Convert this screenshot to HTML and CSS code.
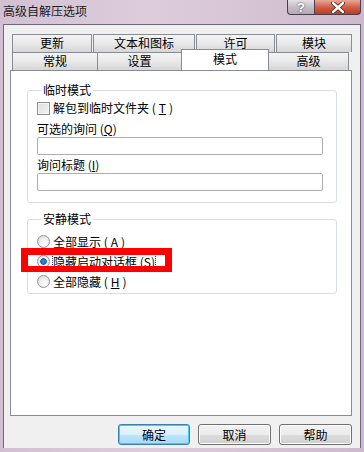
FILE: index.html
```html
<!DOCTYPE html>
<html>
<head>
    <title>高级自解压选项</title>
    <meta charset="UTF-8">
    <link rel="stylesheet" href="styles.css">
</head>
<body>

<div class="window">
    <div class="titlebar">
        <span class="title">高级自解压选项</span>
        <div class="controls">
            <div class="ctl help">?</div>
            <div class="ctl close">
                <svg width="14" height="11" viewBox="0 0 14 11">
                    <path d="M2 1 L12 10 M12 1 L2 10" stroke="#5a1a10" stroke-width="4" stroke-linecap="round"/>
                    <path d="M2 1 L12 10 M12 1 L2 10" stroke="#ffffff" stroke-width="2.4" stroke-linecap="round"/>
                </svg>
            </div>
        </div>
    </div>

    <div class="client">
        <div class="tabs">
            <div class="tab-row row-top">
                <div class="tab" style="width: 80px">更新</div>
                <div class="tab" style="width: 102px">文本和图标</div>
                <div class="tab" style="width: 79px">许可</div>
                <div class="tab" style="width: 76px">模块</div>
            </div>
            <div class="tab-row row-bottom">
                <div class="tab" style="width: 86px">常规</div>
                <div class="tab" style="width: 85px">设置</div>
                <div class="tab active" style="width: 88px">模式</div>
                <div class="tab" style="width: 81px">高级</div>
            </div>
        </div>

        <div class="panel">
            <fieldset class="group group-temp">
                <legend>临时模式</legend>
                <label class="check-row"><span class="checkbox"></span>解包到临时文件夹 (<u>T</u>)</label>
                <div class="field-label">可选的询问 (<u>Q</u>)</div>
                <div class="textbox"></div>
                <div class="field-label">询问标题 (<u>I</u>)</div>
                <div class="textbox"></div>
            </fieldset>

            <fieldset class="group group-silent">
                <legend>安静模式</legend>
                <label class="radio-row"><span class="radio"></span>全部显示 (<u>A</u>)</label>
                <label class="radio-row"><span class="radio checked"></span><span class="focus">隐藏启动对话框 (<u>S</u>)</span></label>
                <label class="radio-row"><span class="radio"></span>全部隐藏 (<u>H</u>)</label>
            </fieldset>
        </div>

        <div class="buttons">
            <button class="default">确定</button>
            <button>取消</button>
            <button>帮助</button>
        </div>
    </div>

    <div class="highlight"></div>
</div>

</body>
</html>
```

FILE: styles.css
```css
/* Global styles */
body {
    margin: 0;
    padding: 0;
    font-family: "Noto Sans CJK SC", "Liberation Sans", sans-serif;
    font-size: 12px;
    color: #000000;
}

.window {
    position: relative;
    width: 364px;
    height: 452px;
    overflow: hidden;
    background: linear-gradient(to right, #d2c0d2, #ddcddb 40%, #d6c4d4 70%, #cdb9cd);
}

/* Title bar */
.titlebar {
    height: 24px;
    display: flex;
    justify-content: space-between;
    align-items: flex-start;
}

.title {
    padding: 3px 0 0 3px;
    line-height: 16px;
    color: #1a1a1a;
}

.controls {
    display: flex;
    margin-right: 3px;
}

.ctl {
    height: 15px;
    border: 1px solid #4a3f4a;
    border-top: none;
    display: flex;
    align-items: center;
    justify-content: center;
    box-sizing: border-box;
}

.help {
    width: 27px;
    border-radius: 0 0 0 4px;
    border-right: none;
    background: linear-gradient(#e6e0e6, #c6bcc6 50%, #b4aab4);
    color: #ffffff;
    font-weight: bold;
    font-family: "Liberation Sans", sans-serif;
    font-size: 13px;
    text-shadow: 0 0 2px #333;
}

.close {
    width: 47px;
    border-radius: 0 0 4px 0;
    background: linear-gradient(#e8a898, #d0604a 50%, #c03a22);
}

/* Client area */
.client {
    height: 424px;
    margin: 0 3px;
    box-sizing: border-box;
    padding: 9px 8px 0 6px;
    background: #f0f0f0;
    border: 1px solid #6f6a78;
    border-bottom: none;
}

.tabs {
    margin-left: 2px;
}

.tab-row {
    display: flex;
    height: 18px;
}

.row-top {
    gap: 1px;
}

.tab {
    box-sizing: border-box;
    height: 18px;
    border: 1px solid #898c95;
    border-bottom: none;
    background: linear-gradient(#f4f4f4, #e8e8e8 50%, #d6d6d6);
    text-align: center;
    line-height: 16px;
}

.row-bottom .tab + .tab {
    margin-left: -1px;
}

.tab.active {
    position: relative;
    z-index: 1;
    height: 21px;
    margin-top: -3px;
    background: #ffffff;
    line-height: 17px;
}

/* Tab page */
.panel {
    height: 346px;
    box-sizing: border-box;
    border: 1px solid #898c95;
    background: #ffffff;
    padding: 12px 14px 0 16px;
}

.group {
    margin: 0;
    padding: 0 0 0 9px;
    border: 1px solid #d5dfe5;
    border-radius: 3px;
    min-width: 0;
}

.group legend {
    padding: 0 2px;
    margin-left: 4px;
    line-height: 14px;
}

.group-temp {
    height: 120px;
    box-sizing: border-box;
}

.group-silent {
    height: 82px;
    box-sizing: border-box;
    margin-top: 9px;
}

u {
    text-decoration: underline;
    text-underline-offset: 1px;
}

.check-row, .radio-row {
    display: flex;
    align-items: center;
    gap: 3px;
    height: 14px;
    line-height: 14px;
}

.check-row {
    margin-top: 4px;
}

.checkbox {
    width: 11px;
    height: 11px;
    border: 1px solid #8e8f8f;
    background: linear-gradient(135deg, #dcdcdc, #f4f4f4);
    box-shadow: inset 0 0 0 1px #f4f4f4;
}

.field-label {
    height: 14px;
    line-height: 14px;
    margin-top: 7px;
}

.textbox + .field-label {
    margin-top: 3px;
}

.textbox {
    width: 284px;
    height: 16px;
    margin-top: 1px;
    border: 1px solid #abadb3;
    border-radius: 2px;
    background: #ffffff;
}

.radio-row {
    height: 19px;
    line-height: 19px;
}

.group-silent .radio-row:first-of-type {
    margin-top: 6px;
}

.radio-row + .radio-row {
    margin-top: 1px;
}

.radio {
    width: 11px;
    height: 11px;
    border: 1px solid #8e8f8f;
    border-radius: 50%;
    background: radial-gradient(circle at 60% 65%, #ffffff, #d8d8d8);
}

.radio.checked {
    background: radial-gradient(circle at 50% 50%, #3a8ee0 0, #1565b8 3px, #e4e4e4 3.5px, #f8f8f8 6px);
}

.focus {
    outline: 1px dotted #333333;
    outline-offset: 0;
    line-height: 13px;
}

/* Buttons */
.buttons {
    display: flex;
    justify-content: flex-end;
    gap: 8px;
    margin-top: 8px;
}

button {
    width: 73px;
    height: 21px;
    padding: 0;
    font-family: "Noto Sans CJK SC", "Liberation Sans", sans-serif;
    font-size: 12px;
    color: #000000;
    border: 1px solid #707070;
    border-radius: 3px;
    background: linear-gradient(#f2f2f2, #ebebeb 50%, #dddddd 51%, #cfcfcf);
    box-shadow: inset 0 0 0 1px #fcfcfc;
}

button.default {
    width: 72px;
    border-color: #3c7fb1;
    background: linear-gradient(#eaf6fd, #d9f0fc 50%, #bee6fd 51%, #a7d9f5);
    box-shadow: inset 0 0 0 1px #48c8f8;
}

/* Red annotation box */
.highlight {
    position: absolute;
    left: 21px;
    top: 248px;
    width: 151px;
    height: 24px;
    box-sizing: border-box;
    border: 7px solid #ff0000;
    border-bottom-width: 6px;
}
```
